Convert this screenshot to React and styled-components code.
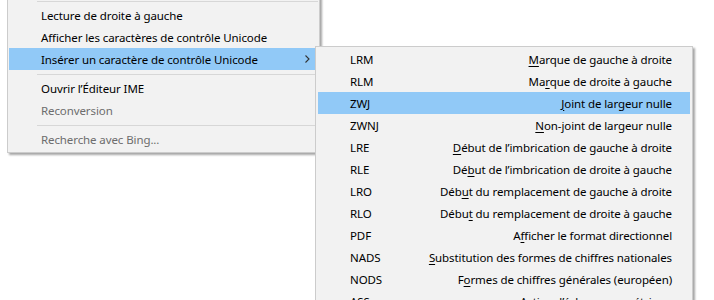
import styled, { createGlobalStyle } from "styled-components"

const GlobalStyle = createGlobalStyle`
  html, body {
    margin: 0;
    padding: 0;
    background: #ffffff;
  }
  body {
    font-family: "Noto Sans", "Liberation Sans", sans-serif;
    font-size: 11.5px;
    letter-spacing: -0.1px;
    color: #000;
  }
`

const Desktop = styled.div`
  position: relative;
  width: 714px;
  height: 300px;
  overflow: hidden;
  background: #ffffff;
`

const MenuPanel = styled.div`
  position: absolute;
  left: ${(p) => p.$left}px;
  top: ${(p) => p.$top}px;
  width: ${(p) => p.$width}px;
  box-sizing: border-box;
  background: #f2f2f2;
  border: 1px solid #cccccc;
  padding: ${(p) => p.$pad};
  box-shadow: 2px 2px 2px rgba(0, 0, 0, 0.35);
`

const Row = styled.div`
  display: flex;
  align-items: center;
  height: 22px;
  padding: 0 ${(p) => p.$padRight}px 0 32px;
  background: ${(p) => (p.$active ? "#91c9f7" : "transparent")};
  color: ${(p) => (p.$disabled ? "#6d6d6d" : "#000")};
  white-space: nowrap;
`

const Label = styled.span`
  flex: 1;
`

const Hint = styled.span`
  margin-left: auto;
  text-align: right;
`

const Separator = styled.div`
  height: 1px;
  margin: 4px 0 2px 28px;
  background: #d7d7d7;
`

const Key = styled.span`
  text-decoration: underline;
  text-underline-offset: 2px;
`

const Chevron = () => (
  <svg width="5" height="8" viewBox="0 0 5 8" fill="none">
    <path d="M0.5 0.5 L4 4 L0.5 7.5" stroke="#333" strokeWidth="1.1" />
  </svg>
)

const mainItems = [
  { type: "sep" },
  { label: "Lecture de droite à gauche" },
  { label: "Afficher les caractères de contrôle Unicode" },
  { label: "Insérer un caractère de contrôle Unicode", active: true, sub: true },
  { type: "sep" },
  { label: "Ouvrir l’Éditeur IME" },
  { label: "Reconversion", disabled: true },
  { type: "sep" },
  { label: "Recherche avec Bing...", disabled: true },
]

// [code, text before key, key, text after key]
const controlChars = [
  ["LRM", "", "M", "arque de gauche à droite"],
  ["RLM", "Ma", "r", "que de droite à gauche"],
  ["ZWJ", "", "J", "oint de largeur nulle"],
  ["ZWNJ", "", "N", "on-joint de largeur nulle"],
  ["LRE", "", "D", "ébut de l’imbrication de gauche à droite"],
  ["RLE", "Dé", "b", "ut de l’imbrication de droite à gauche"],
  ["LRO", "Déb", "u", "t du remplacement de gauche à droite"],
  ["RLO", "Débu", "t", " du remplacement de droite à gauche"],
  ["PDF", "A", "f", "ficher le format directionnel"],
  ["NADS", "", "S", "ubstitution des formes de chiffres nationales"],
  ["NODS", "F", "o", "rmes de chiffres générales (européen)"],
  ["ASS", "", "A", "ctiver l’échange symétrique"],
]

export default function App() {
  return (
    <>
      <GlobalStyle />
      <Desktop>
        <MenuPanel $left={7} $top={-6} $width={313} $pad="2px 1px">
          {mainItems.map((item, i) =>
            item.type === "sep" ? (
              <Separator key={i} />
            ) : (
              <Row key={i} $active={item.active} $disabled={item.disabled} $padRight={8}>
                <Label>{item.label}</Label>
                {item.sub && <Chevron />}
              </Row>
            )
          )}
        </MenuPanel>

        <MenuPanel $left={315} $top={46} $width={378} $pad="1px 2px">
          {controlChars.map(([code, pre, key, post]) => (
            <Row key={code} $active={code === "ZWJ"} $padRight={18}>
              <Label>{code}</Label>
              <Hint>
                {pre}
                <Key>{key}</Key>
                {post}
              </Hint>
            </Row>
          ))}
        </MenuPanel>
      </Desktop>
    </>
  )
}
